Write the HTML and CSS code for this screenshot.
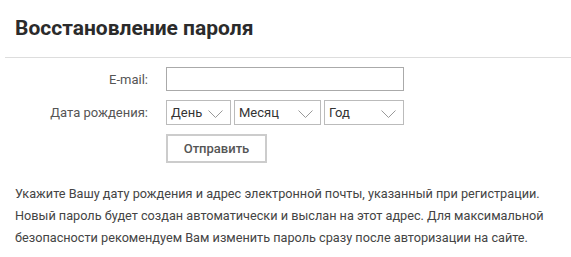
FILE: index.html
```html
<!DOCTYPE html>
<html lang="ru">
<head>
    <meta charset="UTF-8">
    <meta name="viewport" content="width=device-width, initial-scale=1.0">
    <title>Восстановление пароля</title>
    <link rel="stylesheet" href="styles.css">
</head>
<body>
    <div class="page">
        <!-- заголовок -->
        <h1 class="page-title">Восстановление пароля</h1>

        <!-- форма восстановления -->
        <form class="restore-form">
            <div class="form-row">
                <label class="form-label" for="email">E-mail:</label>
                <input class="form-input" type="text" id="email">
            </div>
            <div class="form-row">
                <span class="form-label">Дата рождения:</span>
                <div class="date-selects">
                    <div class="select select-day">День
                        <svg class="select-arrow" width="15" height="8" viewBox="0 0 15 8"><path d="M0.5 0.5 L7.5 7.5 L14.5 0.5" fill="none" stroke="#999" stroke-width="1"/></svg>
                    </div>
                    <div class="select select-month">Месяц
                        <svg class="select-arrow" width="15" height="8" viewBox="0 0 15 8"><path d="M0.5 0.5 L7.5 7.5 L14.5 0.5" fill="none" stroke="#999" stroke-width="1"/></svg>
                    </div>
                    <div class="select select-year">Год
                        <svg class="select-arrow" width="15" height="8" viewBox="0 0 15 8"><path d="M0.5 0.5 L7.5 7.5 L14.5 0.5" fill="none" stroke="#999" stroke-width="1"/></svg>
                    </div>
                </div>
            </div>
            <div class="form-row">
                <span class="form-label"></span>
                <button class="submit-button" type="button">Отправить</button>
            </div>
        </form>

        <p class="restore-note">
            Укажите Вашу дату рождения и адрес электронной почты, указанный при регистрации.
            Новый пароль будет создан автоматически и выслан на этот адрес. Для максимальной
            безопасности рекомендуем Вам изменить пароль сразу после авторизации на сайте.
        </p>
    </div>
</body>
</html>
```

FILE: styles.css
```css
body {
    margin: 0;
    background-color: #fff;
    font-family: Roboto, "Noto Sans", sans-serif;
    color: #444;
}

.page {
    padding-left: 5px;
}

.page-title {
    margin: 0;
    padding: 14px 10px 15px;
    font-size: 21px;
    line-height: 28px;
    font-weight: 700;
    color: #2b2b2b;
    border-bottom: 1px solid #ddd;
}

.restore-form {
    padding-top: 9px;
}

.form-row {
    display: flex;
    align-items: center;
    margin-bottom: 9px;
}

.form-label {
    width: 143px;
    margin-right: 18px;
    text-align: right;
    font-size: 13px;
    color: #555;
}

.form-input {
    box-sizing: border-box;
    width: 238px;
    height: 24px;
    margin: 0;
    border: 1px solid #aaa;
    padding: 0 5px;
    font-family: inherit;
}

.date-selects {
    display: flex;
    gap: 3px;
}

.select {
    box-sizing: border-box;
    position: relative;
    height: 25px;
    line-height: 23px;
    padding-left: 4px;
    border: 1px solid #bbb;
    font-size: 13px;
    color: #333;
}

.select-day { width: 65px; }
.select-month { width: 87px; }
.select-year { width: 80px; }

/* стрелка селекта */
.select-arrow {
    position: absolute;
    right: 7px;
    top: 9px;
}

.submit-button {
    box-sizing: border-box;
    width: 101px;
    height: 29px;
    margin: 0;
    background-color: #fff;
    border: 2px solid #ccc;
    font-family: inherit;
    font-size: 13px;
    font-weight: 500;
    color: #555;
    cursor: pointer;
}

.restore-note {
    margin: 20px 0 0;
    padding-left: 10px;
    font-size: 12.7px;
    line-height: 22px;
    color: #444;
}
```
